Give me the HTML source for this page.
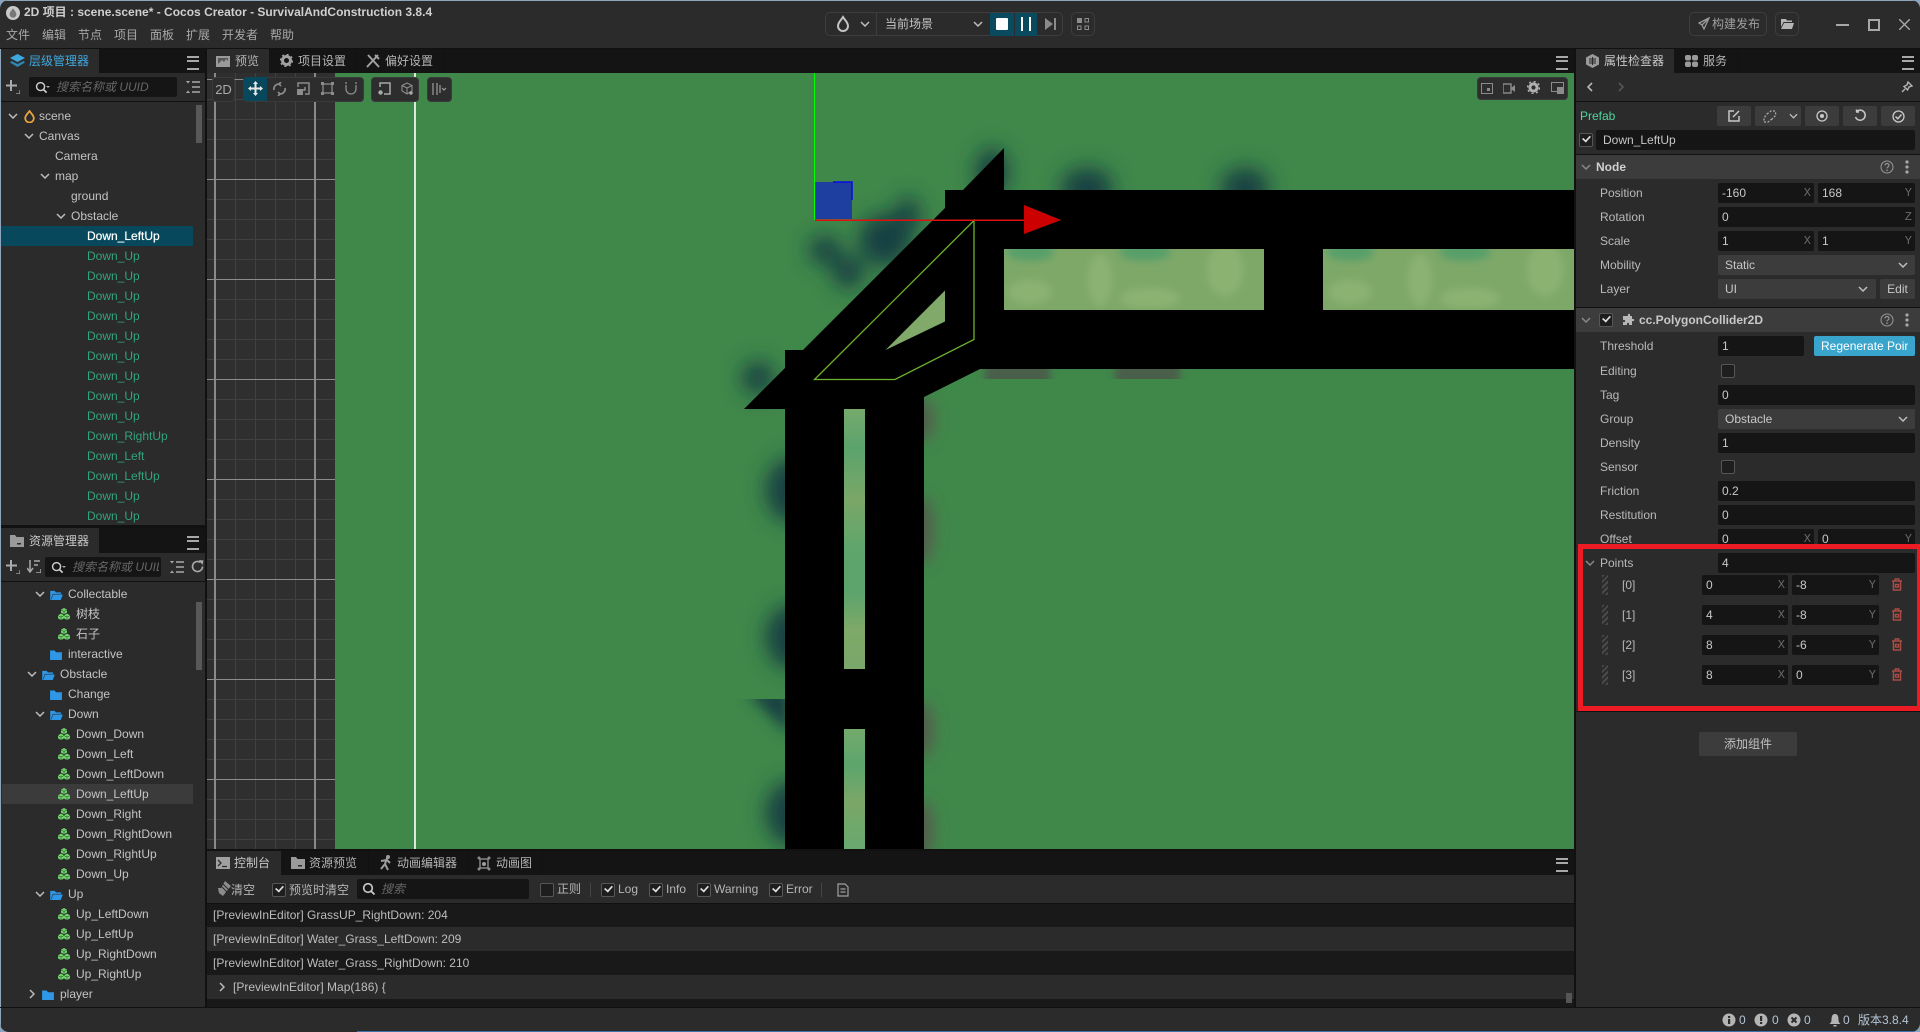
<!DOCTYPE html>
<html lang="zh"><head><meta charset="utf-8"><title>Cocos Creator</title>
<style>
html,body{margin:0;padding:0;width:1920px;height:1032px;overflow:hidden;background:#8aa4bd}
#app{position:absolute;left:0;top:0;width:1920px;height:1032px;background:#2b2b2b;border-radius:9px;overflow:hidden;font:12px/20px "Liberation Sans","Noto Sans CJK SC",sans-serif;color:#c4c4c4}
#app div,#app span,#app svg{position:absolute}
.k{background:#111}
.s{background:#141414}
.t{white-space:nowrap;height:20px;line-height:20px}
.g{color:#32a37c}
.lb{color:#b9b9b9;left:1600px}
.in{background:#151515;height:20px;border-radius:2px;line-height:20px;text-indent:4px;color:#c8c8c8;white-space:nowrap}
.sel{background:#3c3c3c;height:20px;border-radius:2px;line-height:20px;text-indent:7px;color:#c8c8c8}
.ax{right:3px;top:0;font:12px/20px "Liberation Mono",monospace;color:#6a6a6a;text-indent:0}
.cb{width:12px;height:12px;background:#1e1e1e;border:1px solid #565656;border-radius:2px}
.cb.on::after{content:"";position:absolute;left:2px;top:1px;width:7px;height:4px;border-left:2px solid #ddd;border-bottom:2px solid #ddd;transform:rotate(-48deg) scale(.85)}
.h{background:#3c3c3c;height:24px;left:1576px;width:344px}
.bt{background:#3c3c3c;height:20px;top:106px;border-radius:2px}
.hb{width:12px;height:10px;border-top:2px solid #a8a8a8;border-bottom:2px solid #a8a8a8}
.hb::after{content:"";position:absolute;left:0;right:0;top:2px;height:2px;background:#a8a8a8}
.hd{width:6px;height:20px;left:1602px;background:repeating-linear-gradient(135deg,#4a4a4a 0 2px,#2b2b2b 2px 4px)}
.tab{color:#b5b5b5}
</style></head><body>
<div id="app">
<svg width="0" height="0" style="left:0;top:0"><defs>
<symbol id="pf" viewBox="0 0 12 12"><g fill="#6ed66b"><path d="M6 0 9 1.600V4.600L6 6.200 3 4.600V1.600Z"/><path d="M3 5.600 6 7.200V10.400L3 12 0 10.400V7.200Z"/><path d="M9 5.600 12 7.200V10.400L9 12 6 10.400V7.200Z"/></g><g fill="none" stroke="#2b2b2b" stroke-width=".5"><path d="M3 1.900 6 3.400 9 1.900M6 3.400V6M0 7.600 3 9 6 7.600M3 9V12M6 7.600 9 9 12 7.600M9 9V12"/></g></symbol>
<symbol id="fc" viewBox="0 0 13 11"><path fill="#2f97e8" d="M0 .5H5L6.500 2.500H13V11H0Z"/></symbol>
<symbol id="fo" viewBox="0 0 14 11"><path fill="#2f97e8" d="M0 1H5L6.500 2.600H12V4.200H3L1 9.400V11H0ZM3.400 5H14L11.600 11H1Z"/></symbol>
<symbol id="dn" viewBox="0 0 10 6"><path fill="none" stroke="#bdbdbd" stroke-width="1.500" d="M1 1 5 5 9 1"/></symbol>
<symbol id="rt" viewBox="0 0 6 10"><path fill="none" stroke="#bdbdbd" stroke-width="1.500" d="M1 1 5 5 1 9"/></symbol>
<symbol id="tr" viewBox="0 0 12 13"><path fill="none" stroke="#a84c45" stroke-width="1.400" d="M1 3H11M4.200 3V1H7.800V3M2.400 3V12H9.600V3M4.400 6.500H7.600V9H4.400Z"/></symbol>
<symbol id="hp" viewBox="0 0 14 14"><circle cx="7" cy="7" r="6" fill="none" stroke="#999" stroke-width="1"/><path fill="none" stroke="#999" stroke-width="1.100" d="M5 5.400C5 3 9 3 9 5.400 9 7 7 6.800 7 8.400"/><circle cx="7" cy="10.200" r=".8" fill="#999"/></symbol>
<symbol id="dt" viewBox="0 0 4 14"><g fill="#a8a8a8"><circle cx="2" cy="2" r="1.600"/><circle cx="2" cy="7" r="1.600"/><circle cx="2" cy="12" r="1.600"/></g></symbol>
<symbol id="ms" viewBox="0 0 14 14"><circle cx="6" cy="6" r="4.300" fill="none" stroke="#ccc" stroke-width="1.600"/><path stroke="#ccc" stroke-width="1.800" d="M9 9 12.500 12.500"/></symbol>
<symbol id="pl" viewBox="0 0 14 14"><path stroke="#aaa" stroke-width="2" d="M5 0V11M0 5.500H11"/><path stroke="#aaa" stroke-width="1.200" fill="none" d="M10 14H14V10"/></symbol>
<symbol id="ex" viewBox="0 0 14 12"><path stroke="#aaa" stroke-width="1.600" d="M6 1H14M6 6H14M6 11H14"/><path fill="#aaa" d="M0 0H4L2 2.500ZM0 12H4L2 9.500Z"/></symbol>
</defs></svg>

<!-- chrome -->
<div style="left:0;top:0;width:1920px;height:1px;background:#8ea5ba"></div>
<div style="left:0;top:0;width:1px;height:1032px;background:#8ea5ba"></div>
<div style="left:357px;top:1031px;width:1563px;height:1px;background:#3d6fa8"></div>
<div style="left:0;top:1px;width:1920px;height:47px;background:#2b2b2b"></div>
<div class="k" style="left:0;top:48px;width:1920px;height:1px"></div>

<!-- title -->
<svg style="left:6px;top:6px" width="14" height="14" viewBox="0 0 14 14"><circle cx="7" cy="7" r="7" fill="#c9c9c9"/><path fill="#777" d="M7 2.200C9 5 10.400 6.400 10.400 8.400A3.400 3.400 0 0 1 3.600 8.400C3.600 6.400 5 5 7 2.200Z"/></svg>
<div class="t" style="left:24px;top:2px;color:#cfcfcf;font-weight:bold;">2D 项目 : scene.scene* - Cocos Creator - SurvivalAndConstruction 3.8.4</div>
<div class="t" style="left:6px;top:25px;color:#a8a8a8">文件</div>
<div class="t" style="left:42px;top:25px;color:#a8a8a8">编辑</div>
<div class="t" style="left:78px;top:25px;color:#a8a8a8">节点</div>
<div class="t" style="left:114px;top:25px;color:#a8a8a8">项目</div>
<div class="t" style="left:150px;top:25px;color:#a8a8a8">面板</div>
<div class="t" style="left:186px;top:25px;color:#a8a8a8">扩展</div>
<div class="t" style="left:222px;top:25px;color:#a8a8a8">开发者</div>
<div class="t" style="left:270px;top:25px;color:#a8a8a8">帮助</div>

<!-- play controls -->
<div style="left:825px;top:12px;width:236px;height:22px;border:1px solid #3d3d3d;border-radius:5px"></div>
<div style="left:876px;top:13px;width:1px;height:22px;background:#3d3d3d"></div>
<svg style="left:836px;top:15px" width="14" height="17" viewBox="0 0 14 17"><path fill="none" stroke="#c4c4c4" stroke-width="2" d="M7 2C9.500 6 12 7.500 12 11A5 5 0 0 1 2 11C2 7.500 4.500 6 7 2Z"/></svg>
<svg style="left:860px;top:21px" width="10" height="6"><use href="#dn"/></svg>
<div class="t" style="left:885px;top:14px;color:#c4c4c4">当前场景</div>
<svg style="left:973px;top:21px" width="10" height="6"><use href="#dn"/></svg>
<div style="left:990px;top:13px;width:47px;height:23px;background:#0a4a5e"></div>
<div style="left:1014px;top:13px;width:1px;height:23px;background:#2b2b2b"></div>
<div style="left:996px;top:18px;width:12px;height:12px;background:#fff;border-radius:1px"></div>
<div style="left:1021px;top:17px;width:2px;height:14px;background:#fff"></div>
<div style="left:1029px;top:17px;width:2px;height:14px;background:#fff"></div>
<svg style="left:1045px;top:17px" width="11" height="14"><path fill="#8a8a8a" d="M0 1 8 7 0 13Z"/><rect x="9" y="1" width="2" height="12" fill="#8a8a8a"/></svg>
<div style="left:1071px;top:12px;width:22px;height:22px;border:1px solid #3d3d3d;border-radius:5px"></div>
<svg style="left:1077px;top:18px" width="12" height="12"><rect x="0" y="0" width="5" height="5" fill="#8c8c8c"/><rect x="8" y="0.500" width="3.500" height="3.500" fill="none" stroke="#8c8c8c"/><rect x=".5" y="8" width="3.500" height="3.500" fill="none" stroke="#8c8c8c"/><rect x="8" y="8" width="3.500" height="3.500" fill="none" stroke="#8c8c8c"/></svg>

<div style="left:1689px;top:12px;width:76px;height:22px;border:1px solid #3d3d3d;border-radius:5px"></div>
<svg style="left:1698px;top:17px" width="12" height="13"><path fill="none" stroke="#9a9a9a" stroke-width="1.300" d="M11 1 1 6 4 8 6 12Z M11 1 4 8"/></svg>
<div class="t" style="left:1712px;top:14px;color:#a0a0a0">构建发布</div>
<div style="left:1775px;top:12px;width:22px;height:22px;border:1px solid #3d3d3d;border-radius:5px"></div>
<svg style="left:1781px;top:19px" width="13" height="10"><path fill="#b5b5b5" d="M0 0H5L6 1.500H11V3H2.600L0 8ZM3 4H13L11 10H0Z"/></svg>
<div style="left:1836px;top:24px;width:13px;height:2px;background:#a8a8a8"></div>
<div style="left:1868px;top:19px;width:8px;height:8px;border:2px solid #a8a8a8"></div>
<svg style="left:1899px;top:19px" width="11" height="11"><path stroke="#a8a8a8" stroke-width="1.400" d="M0 0 11 11M11 0 0 11"/></svg>

<!-- hierarchy panel -->
<div class="s" style="left:1px;top:49px;width:204px;height:24px"></div>
<div style="left:1px;top:49px;width:98px;height:24px;background:#2b2b2b"></div>
<svg style="left:10px;top:54px" width="15" height="14"><g fill="#3fa8de"><path d="M7.500 0 15 4 7.500 8 0 4Z"/><path d="M1.500 7 7.500 10 13.500 7 15 8.500 7.500 13 0 8.500Z" fill="#2f86b4"/></g></svg>
<div class="t" style="left:29px;top:51px;color:#3fa8de;font-size:12px">层级管理器</div>
<div class="hb" style="left:187px;top:56px"></div>
<div class="k" style="left:205px;top:49px;width:2px;height:958px"></div>
<svg style="left:6px;top:80px" width="14" height="14"><use href="#pl"/></svg>
<div class="in" style="left:29px;top:77px;width:148px;background:#151515"></div>
<svg style="left:35px;top:81px" width="13" height="13"><use href="#ms"/></svg>
<div style="left:46px;top:86px;border-left:2px solid transparent;border-right:2px solid transparent;border-top:2px solid #aaa;width:0;height:0"></div>
<div class="t" style="left:56px;top:77px;color:#666;font-style:italic;">搜索名称或 UUID</div>
<svg style="left:186px;top:81px" width="14" height="12"><use href="#ex"/></svg>
<div class="k" style="left:1px;top:101px;width:204px;height:1px"></div>
<div style="left:196px;top:105px;width:6px;height:38px;background:#585858"></div>

<svg style="left:8px;top:113px" width="10" height="6"><use href="#dn"/></svg>
<svg style="left:24px;top:110px" width="11" height="13" viewBox="0 0 11 13"><path fill="none" stroke="#e8a33c" stroke-width="1.800" d="M5.500 1C7.500 4 9.800 5.500 9.800 8.200A4.300 4.300 0 0 1 1.200 8.200C1.200 5.500 3.500 4 5.500 1Z"/></svg>
<div class="t" style="left:39px;top:106px">scene</div>
<svg style="left:24px;top:133px" width="10" height="6"><use href="#dn"/></svg>
<div class="t" style="left:39px;top:126px">Canvas</div>
<div class="t" style="left:55px;top:146px">Camera</div>
<svg style="left:40px;top:173px" width="10" height="6"><use href="#dn"/></svg>
<div class="t" style="left:55px;top:166px">map</div>
<div class="t" style="left:71px;top:186px">ground</div>
<svg style="left:56px;top:213px" width="10" height="6"><use href="#dn"/></svg>
<div class="t" style="left:71px;top:206px">Obstacle</div>
<div style="left:1px;top:226px;width:192px;height:20px;background:#07485c"></div>
<div class="t" style="left:87px;top:226px;color:#fff;text-shadow:0 0 .6px #fff">Down_LeftUp</div>
<div class="t g" style="left:87px;top:246px">Down_Up</div>
<div class="t g" style="left:87px;top:266px">Down_Up</div>
<div class="t g" style="left:87px;top:286px">Down_Up</div>
<div class="t g" style="left:87px;top:306px">Down_Up</div>
<div class="t g" style="left:87px;top:326px">Down_Up</div>
<div class="t g" style="left:87px;top:346px">Down_Up</div>
<div class="t g" style="left:87px;top:366px">Down_Up</div>
<div class="t g" style="left:87px;top:386px">Down_Up</div>
<div class="t g" style="left:87px;top:406px">Down_Up</div>
<div class="t g" style="left:87px;top:426px">Down_RightUp</div>
<div class="t g" style="left:87px;top:446px">Down_Left</div>
<div class="t g" style="left:87px;top:466px">Down_LeftUp</div>
<div class="t g" style="left:87px;top:486px">Down_Up</div>
<div class="t g" style="left:87px;top:506px">Down_Up</div>
<div class="k" style="left:1px;top:525px;width:204px;height:3px"></div>

<!-- assets panel -->
<div class="s" style="left:1px;top:528px;width:204px;height:25px"></div>
<div style="left:1px;top:528px;width:98px;height:25px;background:#2b2b2b"></div>
<svg style="left:10px;top:535px" width="14" height="12"><path fill="#9a9a9a" d="M0 0H5L6.500 2H14V12H0Z"/><rect x="7" y="8" width="4" height="1.500" fill="#2b2b2b"/></svg>
<div class="t" style="left:29px;top:531px;color:#c8c8c8">资源管理器</div>
<div class="hb" style="left:187px;top:536px"></div>
<svg style="left:6px;top:560px" width="14" height="14"><use href="#pl"/></svg>
<svg style="left:27px;top:560px" width="14" height="13"><path stroke="#aaa" stroke-width="1.500" fill="none" d="M3 0V11M0 8 3 12 6 8M7 1H13M7 5H11M9 13H14V9"/></svg>
<div class="in" style="left:45px;top:557px;width:116px"></div>
<svg style="left:51px;top:561px" width="13" height="13"><use href="#ms"/></svg>
<div style="left:62px;top:566px;border-left:2px solid transparent;border-right:2px solid transparent;border-top:2px solid #aaa;width:0;height:0"></div>
<div style="left:72px;top:557px;width:87px;height:20px;overflow:hidden"><div class="t" style="left:0;top:0;color:#666;font-style:italic">搜索名称或 UUID</div></div>
<svg style="left:170px;top:561px" width="14" height="12"><use href="#ex"/></svg>
<svg style="left:191px;top:560px" width="13" height="13" viewBox="0 0 13 13"><path fill="none" stroke="#aaa" stroke-width="1.600" d="M11.500 6.500A5 5 0 1 1 9.500 2.500"/><path fill="#aaa" d="M8 0 12.500 0.500 11.500 5Z"/></svg>
<div class="k" style="left:1px;top:581px;width:204px;height:1px"></div>
<div style="left:196px;top:602px;width:6px;height:68px;background:#585858"></div>

<svg style="left:35px;top:591px" width="10" height="6"><use href="#dn"/></svg>
<svg style="left:50px;top:590px" width="13" height="10" viewBox="0 0 14 11"><use href="#fo"/></svg>
<div class="t" style="left:68px;top:584px">Collectable</div>
<svg style="left:58px;top:608px" width="12" height="12"><use href="#pf"/></svg><div class="t" style="left:76px;top:604px">树枝</div>
<svg style="left:58px;top:628px" width="12" height="12"><use href="#pf"/></svg><div class="t" style="left:76px;top:624px">石子</div>
<svg style="left:50px;top:650px" width="12" height="10"><use href="#fc"/></svg><div class="t" style="left:68px;top:644px">interactive</div>
<svg style="left:27px;top:671px" width="10" height="6"><use href="#dn"/></svg>
<svg style="left:42px;top:670px" width="13" height="10" viewBox="0 0 14 11"><use href="#fo"/></svg>
<div class="t" style="left:60px;top:664px">Obstacle</div>
<svg style="left:50px;top:690px" width="12" height="10"><use href="#fc"/></svg><div class="t" style="left:68px;top:684px">Change</div>
<svg style="left:35px;top:711px" width="10" height="6"><use href="#dn"/></svg>
<svg style="left:50px;top:710px" width="13" height="10" viewBox="0 0 14 11"><use href="#fo"/></svg>
<div class="t" style="left:68px;top:704px">Down</div>
<svg style="left:58px;top:728px" width="12" height="12"><use href="#pf"/></svg><div class="t" style="left:76px;top:724px">Down_Down</div>
<svg style="left:58px;top:748px" width="12" height="12"><use href="#pf"/></svg><div class="t" style="left:76px;top:744px">Down_Left</div>
<svg style="left:58px;top:768px" width="12" height="12"><use href="#pf"/></svg><div class="t" style="left:76px;top:764px">Down_LeftDown</div>
<div style="left:2px;top:784px;width:191px;height:20px;background:#3b3b3b"></div>
<svg style="left:58px;top:788px" width="12" height="12"><use href="#pf"/></svg><div class="t" style="left:76px;top:784px">Down_LeftUp</div>
<svg style="left:58px;top:808px" width="12" height="12"><use href="#pf"/></svg><div class="t" style="left:76px;top:804px">Down_Right</div>
<svg style="left:58px;top:828px" width="12" height="12"><use href="#pf"/></svg><div class="t" style="left:76px;top:824px">Down_RightDown</div>
<svg style="left:58px;top:848px" width="12" height="12"><use href="#pf"/></svg><div class="t" style="left:76px;top:844px">Down_RightUp</div>
<svg style="left:58px;top:868px" width="12" height="12"><use href="#pf"/></svg><div class="t" style="left:76px;top:864px">Down_Up</div>
<svg style="left:35px;top:891px" width="10" height="6"><use href="#dn"/></svg>
<svg style="left:50px;top:890px" width="13" height="10" viewBox="0 0 14 11"><use href="#fo"/></svg>
<div class="t" style="left:68px;top:884px">Up</div>
<svg style="left:58px;top:908px" width="12" height="12"><use href="#pf"/></svg><div class="t" style="left:76px;top:904px">Up_LeftDown</div>
<svg style="left:58px;top:928px" width="12" height="12"><use href="#pf"/></svg><div class="t" style="left:76px;top:924px">Up_LeftUp</div>
<svg style="left:58px;top:948px" width="12" height="12"><use href="#pf"/></svg><div class="t" style="left:76px;top:944px">Up_RightDown</div>
<svg style="left:58px;top:968px" width="12" height="12"><use href="#pf"/></svg><div class="t" style="left:76px;top:964px">Up_RightUp</div>
<svg style="left:29px;top:989px" width="6" height="10"><use href="#rt"/></svg>
<svg style="left:42px;top:990px" width="12" height="10"><use href="#fc"/></svg><div class="t" style="left:60px;top:984px">player</div>

<!-- center tabs -->
<div class="s" style="left:207px;top:49px;width:1367px;height:24px"></div>
<div style="left:207px;top:49px;width:62px;height:24px;background:#2b2b2b"></div>
<div class="k" style="left:356px;top:49px;width:1px;height:24px"></div>
<div class="k" style="left:443px;top:49px;width:1px;height:24px"></div>
<svg style="left:216px;top:56px" width="14" height="11"><rect width="14" height="11" fill="#9a9a9a"/><path fill="#2b2b2b" d="M3 7 6 4 8 6 10 3 12 5V2H2V8Z" opacity=".6"/></svg>
<div class="t tab" style="left:235px;top:51px">预览</div>
<svg style="left:280px;top:54px" width="13" height="13" viewBox="0 0 13 13"><circle cx="6.500" cy="6.500" r="4" fill="none" stroke="#a0a0a0" stroke-width="3"/><circle cx="6.500" cy="6.500" r="6" fill="none" stroke="#a0a0a0" stroke-width="1.500" stroke-dasharray="2 2.700"/></svg>
<div class="t tab" style="left:298px;top:51px">项目设置</div>
<svg style="left:366px;top:54px" width="14" height="14"><path stroke="#a0a0a0" stroke-width="2" fill="none" d="M2 1 13 13M12 1 1 13M9 1 13 5"/></svg>
<div class="t tab" style="left:385px;top:51px">偏好设置</div>
<div class="hb" style="left:1556px;top:56px"></div>

<!-- scene -->
<div style="left:207px;top:73px;width:128px;height:776px;background-color:#2f2f2f;background-image:linear-gradient(#8c8c8c 1px,transparent 1px),linear-gradient(#414141 1px,transparent 1px),linear-gradient(90deg,#414141 1px,transparent 1px);background-size:100% 100px,100% 20px,20px 100%;background-position:0 6px,0 6px,8px 0"></div>
<div style="left:214px;top:73px;width:2px;height:776px;background:#8a8a8a"></div>
<div style="left:314px;top:73px;width:2px;height:776px;background:#8a8a8a"></div>
<div style="left:335px;top:73px;width:1239px;height:776px;background:#40874a"></div>
<div style="left:414px;top:73px;width:2px;height:776px;background:#dce8dc"></div>

<svg style="left:207px;top:73px" width="1367" height="776" viewBox="207 73 1367 776">
<defs>
<filter id="b1" filterUnits="userSpaceOnUse" x="207" y="73" width="1367" height="776"><feGaussianBlur stdDeviation="10"/></filter>
<filter id="b2" filterUnits="userSpaceOnUse" x="207" y="73" width="1367" height="776"><feGaussianBlur stdDeviation="4"/></filter>
<filter id="b3" filterUnits="userSpaceOnUse" x="207" y="73" width="1367" height="776"><feGaussianBlur stdDeviation="7"/></filter>
<clipPath id="c1"><rect x="700" y="699" width="300" height="150"/></clipPath>
<clipPath id="c2"><rect x="900" y="369" width="400" height="10"/></clipPath>
<clipPath id="cw"><rect x="1004" y="249" width="260" height="61"/><rect x="1323" y="249" width="251" height="61"/></clipPath>
<linearGradient id="gs" x1="0" y1="0" x2="0" y2="1"><stop offset="0" stop-color="#76aa6c"/><stop offset=".15" stop-color="#5ba36c"/><stop offset=".35" stop-color="#7aa768"/><stop offset=".55" stop-color="#5ea56c"/><stop offset=".7" stop-color="#5ba36c"/><stop offset=".85" stop-color="#7ea968"/><stop offset="1" stop-color="#7aa86a"/></linearGradient>
<linearGradient id="gs2" x1="0" y1="0" x2="0" y2="1"><stop offset="0" stop-color="#74aa6c"/><stop offset=".3" stop-color="#5ca56c"/><stop offset=".6" stop-color="#7aa768"/><stop offset="1" stop-color="#68a86e"/></linearGradient>
</defs>
<g fill="#163f42" filter="url(#b1)">
<ellipse cx="1087" cy="188" rx="26" ry="20"/>
<ellipse cx="1245" cy="188" rx="24" ry="20"/>
<ellipse cx="992" cy="172" rx="16" ry="24"/>
<ellipse cx="908" cy="215" rx="12" ry="18"/>
<ellipse cx="825" cy="250" rx="16" ry="14"/>
<ellipse cx="848" cy="272" rx="16" ry="16"/>
<ellipse cx="885" cy="240" rx="26" ry="26"/>
<ellipse cx="758" cy="378" rx="16" ry="16"/>
<ellipse cx="792" cy="490" rx="26" ry="32"/>
<ellipse cx="792" cy="637" rx="26" ry="32"/>
<ellipse cx="792" cy="813" rx="26" ry="32"/>
</g>
<g clip-path="url(#c1)"><path fill="#163f42" filter="url(#b3)" d="M745 690H790V735Z"/></g>
<g fill="#525f4d" filter="url(#b3)">
<ellipse cx="922" cy="420" rx="12" ry="22"/><ellipse cx="922" cy="530" rx="12" ry="34"/><ellipse cx="922" cy="730" rx="12" ry="28"/><ellipse cx="922" cy="830" rx="12" ry="30"/>
</g>
<g clip-path="url(#c2)"><g fill="#4a5f48" filter="url(#b2)"><rect x="985" y="360" width="65" height="30"/><rect x="1115" y="360" width="65" height="30"/></g></g>
<path fill="#000" d="M1004 148V190H1574V369H980L924 397V849H785V409H744L785 368V350H803L945 208V190H963Z"/>
<rect x="1004" y="249" width="260" height="61" fill="#7ea868"/>
<rect x="1323" y="249" width="251" height="61" fill="#7ea868"/>
<g clip-path="url(#cw)">
<g filter="url(#b2)">
<ellipse cx="1030" cy="252" rx="24" ry="9" fill="#579f6b"/>
<ellipse cx="1145" cy="252" rx="26" ry="9" fill="#579f6b"/>
<ellipse cx="1100" cy="280" rx="12" ry="26" fill="#8cb272"/>
<ellipse cx="1030" cy="292" rx="22" ry="12" fill="#8cb272"/>
<ellipse cx="1150" cy="298" rx="30" ry="10" fill="#8cb272"/>
<ellipse cx="1225" cy="270" rx="18" ry="26" fill="#8cb272"/>
<ellipse cx="1350" cy="252" rx="24" ry="9" fill="#579f6b"/>
<ellipse cx="1465" cy="252" rx="26" ry="9" fill="#579f6b"/>
<ellipse cx="1420" cy="280" rx="12" ry="26" fill="#8cb272"/>
<ellipse cx="1350" cy="292" rx="22" ry="12" fill="#8cb272"/>
<ellipse cx="1470" cy="298" rx="30" ry="10" fill="#8cb272"/>
<ellipse cx="1545" cy="270" rx="18" ry="26" fill="#8cb272"/>
</g></g>
<path fill="#80a96a" d="M885.500 350 945 290.500V321.500Z"/>
<rect x="844" y="409" width="21" height="260" fill="url(#gs)"/>
<rect x="844" y="729" width="21" height="120" fill="url(#gs2)"/>
<path fill="none" stroke="#6db32c" stroke-width="1.300" d="M974 220.500 814.500 379.500H895L974 339.500Z"/>
<rect x="815" y="182" width="37" height="37" fill="#1e3fa0"/>
<path fill="none" stroke="#0a0ae6" stroke-width="1.500" d="M833 182H852V200"/>
<rect x="814" y="73" width="1" height="147" fill="#00ff00"/>
<rect x="815" y="219.500" width="210" height="1.500" fill="#e01010"/>
<path fill="#cc0000" d="M1024 205 1061 220 1024 234Z"/>
</svg>

<!-- scene toolbar -->
<div style="left:212px;top:77px;width:21px;height:23px;background:#2d2d2d;border:1px solid #3a3a3a;border-radius:4px;color:#aaa;text-align:center;line-height:23px;font-size:13px">2D</div>
<div style="left:243px;top:77px;width:119px;height:23px;background:#2d2d2d;border:1px solid #3a3a3a;border-radius:4px"></div>
<div style="left:243px;top:77px;width:24px;height:24px;background:#07485c;border-radius:4px 0 0 4px"></div>
<svg style="left:248px;top:81px" width="15" height="15" viewBox="0 0 15 15"><path fill="#e8e8e8" d="M7.500 0 10 3H8.500V6.500H12V5L15 7.500 12 10V8.500H8.500V12H10L7.500 15 5 12H6.500V8.500H3V10L0 7.500 3 5V6.500H6.500V3H5Z"/></svg>
<svg style="left:273px;top:82px" width="13" height="14" viewBox="0 0 13 14"><path fill="none" stroke="#8c8c8c" stroke-width="1.700" d="M1 8C0 4 4 1.500 7 2M12 6C13 10 9 12.500 6 12M8 0 6 2 8 4M5 10 7 12 5 14"/></svg>
<svg style="left:297px;top:82px" width="13" height="13"><path fill="none" stroke="#8c8c8c" stroke-width="1.500" d="M1 5V1H12V12H8M5 8H8V5"/><rect x="0" y="7" width="6" height="6" fill="#8c8c8c"/></svg>
<svg style="left:321px;top:82px" width="13" height="13"><rect x="2" y="2" width="9" height="9" fill="none" stroke="#8c8c8c" stroke-width="1.300"/><g fill="#8c8c8c"><rect width="3" height="3"/><rect x="10" width="3" height="3"/><rect y="10" width="3" height="3"/><rect x="10" y="10" width="3" height="3"/></g></svg>
<svg style="left:345px;top:82px" width="12" height="13"><path fill="none" stroke="#8c8c8c" stroke-width="1.300" d="M1 3V7A5 5 0 0 0 11 7V3"/><path stroke="#8c8c8c" stroke-width="1.300" d="M1 0V2M11 0V2"/></svg>
<div style="left:371px;top:77px;width:46px;height:23px;background:#2d2d2d;border:1px solid #3a3a3a;border-radius:4px"></div>
<svg style="left:378px;top:82px" width="13" height="13"><path fill="none" stroke="#aaa" stroke-width="1.500" d="M2 5V1H12V12H6"/><circle cx="2.500" cy="10.500" r="2.200" fill="#aaa"/></svg>
<svg style="left:401px;top:82px" width="13" height="14"><path fill="none" stroke="#8c8c8c" stroke-width="1.100" d="M6 1 11 3.500V9L6 12 1 9V3.500ZM1 3.500 6 6 11 3.500M6 6V12"/><circle cx="10" cy="11" r="1.700" fill="#aaa"/></svg>
<div style="left:427px;top:77px;width:23px;height:23px;background:#2d2d2d;border:1px solid #3a3a3a;border-radius:4px"></div>
<svg style="left:432px;top:82px" width="15" height="14"><path stroke="#9c9c9c" stroke-width="1.200" fill="none" d="M1 1V13M5 1V13M8 3V11M10 6 12 8 14 6"/></svg>

<!-- scene right tools -->
<div style="left:1477px;top:77px;width:89px;height:21px;background:#2d2d2d;border:1px solid #3a3a3a;border-radius:4px"></div>
<svg style="left:1481px;top:83px" width="12" height="11"><rect x=".5" y=".5" width="11" height="10" fill="none" stroke="#8c8c8c"/><rect x="6" y="5" width="3" height="3" fill="#8c8c8c"/></svg>
<svg style="left:1503px;top:83px" width="12" height="11"><rect y="1" width="8" height="9" fill="none" stroke="#8c8c8c" stroke-width="1.400"/><path fill="#8c8c8c" d="M8 5 12 2V9L8 6Z"/></svg>
<svg style="left:1527px;top:81px" width="13" height="13" viewBox="0 0 13 13"><circle cx="6.500" cy="6.500" r="3.600" fill="none" stroke="#b0b0b0" stroke-width="3"/><circle cx="6.500" cy="6.500" r="6" fill="none" stroke="#b0b0b0" stroke-width="1.500" stroke-dasharray="2 2.700"/></svg>
<svg style="left:1551px;top:82px" width="13" height="12"><rect x=".5" y=".5" width="12" height="9" fill="none" stroke="#8c8c8c"/><rect x="6" y="5" width="7" height="7" fill="#8c8c8c"/></svg>

<!-- console -->
<div class="k" style="left:207px;top:849px;width:1367px;height:2px"></div>
<div class="s" style="left:207px;top:851px;width:1367px;height:24px"></div>
<div style="left:207px;top:851px;width:74px;height:24px;background:#2b2b2b"></div>
<div class="k" style="left:368px;top:851px;width:1px;height:24px"></div>
<div class="k" style="left:467px;top:851px;width:1px;height:24px"></div>
<div class="k" style="left:542px;top:851px;width:1px;height:24px"></div>
<svg style="left:216px;top:857px" width="14" height="12"><rect width="14" height="12" fill="#a0a0a0"/><path stroke="#2b2b2b" stroke-width="1.300" fill="none" d="M2 3 5 6 2 9M6 9.500H11"/></svg>
<div class="t" style="left:234px;top:853px;color:#c8c8c8">控制台</div>
<svg style="left:291px;top:857px" width="14" height="12"><path fill="#9a9a9a" d="M0 0H5L6.500 2H14V12H0Z"/><rect x="7" y="8" width="4" height="1.500" fill="#2b2b2b"/></svg>
<div class="t tab" style="left:309px;top:853px">资源预览</div>
<svg style="left:379px;top:855px" width="13" height="16"><path fill="none" stroke="#9c9c9c" stroke-width="2" d="M8 3 6 9 9 15M6 9 2 14M2 6 8 5 11 8"/><circle cx="9" cy="2" r="2" fill="#9c9c9c"/></svg>
<div class="t tab" style="left:397px;top:853px">动画编辑器</div>
<svg style="left:477px;top:856px" width="14" height="15"><rect x="3" y="3" width="8" height="9" fill="none" stroke="#8c8c8c" stroke-width="1.400"/><circle cx="7" cy="8" r="2" fill="#9c9c9c"/><g fill="#8c8c8c"><circle cx="2" cy="2" r="1.500"/><circle cx="12" cy="2" r="1.500"/><circle cx="2" cy="13" r="1.500"/><circle cx="12" cy="13" r="1.500"/></g></svg>
<div class="t tab" style="left:496px;top:853px">动画图</div>
<div class="hb" style="left:1556px;top:858px"></div>
<svg style="left:218px;top:881px" width="13" height="15"><path fill="#8c8c8c" d="M7 0 13 5 8 11 5 15 1 12 0 7 3 7Z"/><path stroke="#2b2b2b" d="M3 5 9 11M5 3 11 9"/></svg>
<div class="t" style="left:231px;top:880px;color:#b5b5b5">清空</div>
<div class="cb on" style="left:272px;top:883px"></div>
<div class="t" style="left:289px;top:880px;color:#b5b5b5">预览时清空</div>
<div class="in" style="left:357px;top:879px;width:172px"></div>
<svg style="left:362px;top:882px" width="14" height="14"><use href="#ms"/></svg>
<div class="t" style="left:381px;top:879px;color:#666;font-style:italic">搜索</div>
<div class="cb" style="left:540px;top:883px"></div>
<div class="t" style="left:557px;top:879px;color:#b5b5b5">正则</div>
<div style="left:590px;top:883px;width:1px;height:14px;background:#444"></div>
<div class="cb on" style="left:601px;top:883px"></div><div class="t" style="left:618px;top:879px;color:#b5b5b5">Log</div>
<div class="cb on" style="left:649px;top:883px"></div><div class="t" style="left:666px;top:879px;color:#b5b5b5">Info</div>
<div class="cb on" style="left:697px;top:883px"></div><div class="t" style="left:714px;top:879px;color:#b5b5b5">Warning</div>
<div class="cb on" style="left:769px;top:883px"></div><div class="t" style="left:786px;top:879px;color:#b5b5b5">Error</div>
<div style="left:821px;top:883px;width:1px;height:14px;background:#444"></div>
<svg style="left:837px;top:883px" width="12" height="14"><path fill="none" stroke="#a0a0a0" stroke-width="1.200" d="M1 1H8L11 4V13H1ZM3.500 6H8.500M3.500 9H8.500"/></svg>
<div class="k" style="left:207px;top:903px;width:1367px;height:1px"></div>
<div style="left:207px;top:904px;width:1367px;height:23px;background:#191919"></div>
<div style="left:207px;top:951px;width:1367px;height:24px;background:#191919"></div>
<div style="left:207px;top:999px;width:1367px;height:8px;background:#191919"></div>
<div class="t" style="left:213px;top:905px;color:#bdbdbd">[PreviewInEditor] GrassUP_RightDown: 204</div>
<div class="t" style="left:213px;top:929px;color:#bdbdbd">[PreviewInEditor] Water_Grass_LeftDown: 209</div>
<div class="t" style="left:213px;top:953px;color:#bdbdbd">[PreviewInEditor] Water_Grass_RightDown: 210</div>
<svg style="left:219px;top:982px" width="6" height="10"><use href="#rt"/></svg>
<div class="t" style="left:233px;top:977px;color:#bdbdbd">[PreviewInEditor] Map(186) {</div>
<div style="left:1566px;top:993px;width:6px;height:10px;background:#555"></div>

<!-- right panel -->
<div class="k" style="left:1574px;top:49px;width:2px;height:958px"></div>
<div class="s" style="left:1576px;top:49px;width:344px;height:24px"></div>
<div style="left:1576px;top:49px;width:98px;height:24px;background:#2b2b2b"></div>
<div class="k" style="left:1737px;top:49px;width:1px;height:24px"></div>
<svg style="left:1586px;top:54px" width="13" height="14"><path fill="#9a9a9a" d="M6.500 0 13 3.500V10.500L6.500 14 0 10.500V3.500Z"/><path stroke="#2b2b2b" d="M6.500 3V11M3 7H10M3 5H10M3 9H10"/></svg>
<div class="t" style="left:1604px;top:51px;color:#c8c8c8">属性检查器</div>
<svg style="left:1685px;top:55px" width="13" height="12"><g fill="#9a9a9a"><rect width="6" height="5.500" rx="2"/><rect x="7" width="6" height="5.500" rx="2"/><rect y="6.500" width="6" height="5.500" rx="2"/><rect x="7" y="6.500" width="6" height="5.500" rx="2"/></g></svg>
<div class="t tab" style="left:1703px;top:51px">服务</div>
<div class="hb" style="left:1902px;top:56px"></div>
<svg style="left:1587px;top:82px" width="6" height="10"><path fill="none" stroke="#b5b5b5" stroke-width="1.600" d="M5 1 1 5 5 9"/></svg>
<svg style="left:1618px;top:82px" width="6" height="10"><path fill="none" stroke="#555" stroke-width="1.600" d="M1 1 5 5 1 9"/></svg>
<svg style="left:1901px;top:81px" width="12" height="12"><path fill="none" stroke="#b5b5b5" stroke-width="1.400" d="M7 1 11 5 8 6 6.500 9 3 5.500 6 4ZM4 8 1 11"/></svg>
<div class="k" style="left:1576px;top:101px;width:344px;height:1px"></div>

<div class="t" style="left:1580px;top:106px;color:#4fd6a0">Prefab</div>
<div class="bt" style="left:1717px;width:34px"></div>
<svg style="left:1728px;top:110px" width="12" height="12"><path fill="none" stroke="#c8c8c8" stroke-width="1.500" d="M6 1H1V11H11V6M5 7 11 1"/></svg>
<div class="bt" style="left:1755px;width:46px"></div>
<svg style="left:1763px;top:110px" width="14" height="13"><path fill="none" stroke="#aaa" stroke-width="1.300" stroke-dasharray="2 1.500" d="M4 4 8 1 12 1 13 5 9 9M9 9 5 12 1 12 1 8 4 4"/></svg>
<svg style="left:1789px;top:113px" width="9" height="6"><use href="#dn"/></svg>
<div class="bt" style="left:1805px;width:34px"></div>
<svg style="left:1816px;top:110px" width="12" height="12"><circle cx="6" cy="6" r="5" fill="none" stroke="#c8c8c8" stroke-width="1.300"/><circle cx="6" cy="6" r="2" fill="#c8c8c8"/></svg>
<div class="bt" style="left:1843px;width:34px"></div>
<svg style="left:1854px;top:109px" width="13" height="13"><path fill="none" stroke="#c8c8c8" stroke-width="1.500" d="M2.500 2.500V.5M2 3H5M2.300 3A5 5 0 1 1 1.500 8"/></svg>
<div class="bt" style="left:1881px;width:34px"></div>
<svg style="left:1892px;top:110px" width="13" height="13"><circle cx="6.500" cy="6.500" r="5.500" fill="none" stroke="#c8c8c8" stroke-width="1.300"/><path fill="none" stroke="#c8c8c8" stroke-width="1.500" d="M3.500 6.500 5.800 8.800 9.500 4.500"/></svg>

<div class="cb on" style="left:1579px;top:133px"></div>
<div class="in" style="left:1596px;top:130px;width:319px;text-indent:7px">Down_LeftUp</div>
<div class="k" style="left:1576px;top:154px;width:344px;height:1px"></div>

<div class="h" style="top:155px"></div>
<svg style="left:1581px;top:164px" width="10" height="6"><path fill="none" stroke="#888" stroke-width="1.500" d="M1 1 5 5 9 1"/></svg>
<div class="t" style="left:1596px;top:157px;font-weight:bold;color:#d0d0d0">Node</div>
<svg style="left:1880px;top:160px" width="14" height="14"><use href="#hp"/></svg>
<svg style="left:1905px;top:160px" width="4" height="14"><use href="#dt"/></svg>
<div class="t lb" style="top:183px">Position</div>
<div class="in" style="left:1718px;top:183px;width:96px">-160<span class="ax">X</span></div>
<div class="in" style="left:1818px;top:183px;width:97px">168<span class="ax">Y</span></div>
<div class="t lb" style="top:207px">Rotation</div>
<div class="in" style="left:1718px;top:207px;width:197px">0<span class="ax">Z</span></div>
<div class="t lb" style="top:231px">Scale</div>
<div class="in" style="left:1718px;top:231px;width:96px">1<span class="ax">X</span></div>
<div class="in" style="left:1818px;top:231px;width:97px">1<span class="ax">Y</span></div>
<div class="t lb" style="top:255px">Mobility</div>
<div class="sel" style="left:1718px;top:255px;width:197px">Static</div>
<svg style="left:1898px;top:262px" width="10" height="6"><use href="#dn"/></svg>
<div class="t lb" style="top:279px">Layer</div>
<div class="sel" style="left:1718px;top:279px;width:158px">UI</div>
<svg style="left:1858px;top:286px" width="10" height="6"><use href="#dn"/></svg>
<div class="sel" style="left:1880px;top:279px;width:35px;text-align:center;text-indent:0">Edit</div>
<div class="k" style="left:1576px;top:307px;width:344px;height:1px"></div>

<div class="h" style="top:308px"></div>
<svg style="left:1581px;top:317px" width="10" height="6"><path fill="none" stroke="#888" stroke-width="1.500" d="M1 1 5 5 9 1"/></svg>
<div class="cb on" style="left:1599px;top:313px"></div>
<svg style="left:1622px;top:313px" width="13" height="14"><path fill="#b8b8b8" d="M4 3H6C5 0 9 0 8 3H10V6C13 5 13 9 10 8V12H7C8 9 4 9 5 12H1V9C4 10 4 6 1 7V3Z"/></svg>
<div class="t" style="left:1639px;top:310px;font-weight:bold;color:#c8c8c8">cc.PolygonCollider2D</div>
<svg style="left:1880px;top:313px" width="14" height="14"><use href="#hp"/></svg>
<svg style="left:1905px;top:313px" width="4" height="14"><use href="#dt"/></svg>

<div class="t lb" style="top:336px">Threshold</div>
<div class="in" style="left:1718px;top:336px;width:86px">1</div>
<div style="left:1814px;top:336px;width:101px;height:20px;background:#3aa5cc;border-radius:2px"><div style="left:7px;top:0;width:87px;height:20px;overflow:hidden"><div class="t" style="left:0;top:0;color:#fff">Regenerate Points</div></div></div>
<div class="t lb" style="top:361px">Editing</div>
<div class="cb" style="left:1721px;top:364px"></div>
<div class="t lb" style="top:385px">Tag</div>
<div class="in" style="left:1718px;top:385px;width:197px">0</div>
<div class="t lb" style="top:409px">Group</div>
<div class="sel" style="left:1718px;top:409px;width:197px">Obstacle</div>
<svg style="left:1898px;top:416px" width="10" height="6"><use href="#dn"/></svg>
<div class="t lb" style="top:433px">Density</div>
<div class="in" style="left:1718px;top:433px;width:197px">1</div>
<div class="t lb" style="top:457px">Sensor</div>
<div class="cb" style="left:1721px;top:460px"></div>
<div class="t lb" style="top:481px">Friction</div>
<div class="in" style="left:1718px;top:481px;width:197px">0.2</div>
<div class="t lb" style="top:505px">Restitution</div>
<div class="in" style="left:1718px;top:505px;width:197px">0</div>
<div class="t lb" style="top:529px">Offset</div>
<div class="in" style="left:1718px;top:529px;width:96px">0<span class="ax">X</span></div>
<div class="in" style="left:1818px;top:529px;width:97px">0<span class="ax">Y</span></div>

<div style="left:1583px;top:549px;width:337px;height:157px;background:#2b2b2b"></div>
<svg style="left:1585px;top:560px" width="10" height="6"><path fill="none" stroke="#888" stroke-width="1.500" d="M1 1 5 5 9 1"/></svg>
<div class="t lb" style="top:553px">Points</div>
<div class="in" style="left:1718px;top:553px;width:197px">4</div>
<div class="hd" style="top:575px"></div>
<div class="t" style="left:1622px;top:575px;color:#b9b9b9">[0]</div>
<div class="in" style="left:1702px;top:575px;width:86px">0<span class="ax">X</span></div>
<div class="in" style="left:1792px;top:575px;width:87px">-8<span class="ax">Y</span></div>
<svg style="left:1891px;top:578px" width="12" height="13"><use href="#tr"/></svg>
<div class="hd" style="top:605px"></div>
<div class="t" style="left:1622px;top:605px;color:#b9b9b9">[1]</div>
<div class="in" style="left:1702px;top:605px;width:86px">4<span class="ax">X</span></div>
<div class="in" style="left:1792px;top:605px;width:87px">-8<span class="ax">Y</span></div>
<svg style="left:1891px;top:608px" width="12" height="13"><use href="#tr"/></svg>
<div class="hd" style="top:635px"></div>
<div class="t" style="left:1622px;top:635px;color:#b9b9b9">[2]</div>
<div class="in" style="left:1702px;top:635px;width:86px">8<span class="ax">X</span></div>
<div class="in" style="left:1792px;top:635px;width:87px">-6<span class="ax">Y</span></div>
<svg style="left:1891px;top:638px" width="12" height="13"><use href="#tr"/></svg>
<div class="hd" style="top:665px"></div>
<div class="t" style="left:1622px;top:665px;color:#b9b9b9">[3]</div>
<div class="in" style="left:1702px;top:665px;width:86px">8<span class="ax">X</span></div>
<div class="in" style="left:1792px;top:665px;width:87px">0<span class="ax">Y</span></div>
<svg style="left:1891px;top:668px" width="12" height="13"><use href="#tr"/></svg>

<div style="left:1578px;top:544px;width:342px;height:5px;background:#ed1c24"></div>
<div style="left:1578px;top:706px;width:342px;height:5px;background:#ed1c24"></div>
<div style="left:1578px;top:544px;width:5px;height:167px;background:#ed1c24"></div>
<div style="left:1917px;top:544px;width:3px;height:167px;background:#ed1c24"></div>
<div class="k" style="left:1576px;top:711px;width:344px;height:1px"></div>

<div style="left:1699px;top:732px;width:98px;height:24px;background:#3c3c3c;border-radius:2px;line-height:24px;text-align:center;color:#c0c0c0">添加组件</div>

<!-- status bar -->
<div class="k" style="left:0;top:1007px;width:1920px;height:1px"></div>
<svg style="left:1722px;top:1013px" width="14" height="14"><circle cx="7" cy="7" r="6.500" fill="#b5b5b5"/><rect x="6" y="6" width="2.200" height="5" fill="#2b2b2b"/><rect x="6" y="3" width="2.200" height="2" fill="#2b2b2b"/></svg>
<div class="t" style="left:1739px;top:1010px;color:#b5c5d5">0</div>
<svg style="left:1754px;top:1013px" width="14" height="14"><circle cx="7" cy="7" r="6.500" fill="#b5b5b5"/><rect x="6" y="3" width="2.200" height="5" fill="#2b2b2b"/><rect x="6" y="9" width="2.200" height="2" fill="#2b2b2b"/></svg>
<div class="t" style="left:1772px;top:1010px;color:#b5c5d5">0</div>
<svg style="left:1787px;top:1013px" width="14" height="14"><circle cx="7" cy="7" r="6.500" fill="#b5b5b5"/><path stroke="#2b2b2b" stroke-width="2" d="M4.500 4.500 9.500 9.500M9.500 4.500 4.500 9.500"/></svg>
<div class="t" style="left:1804px;top:1010px;color:#b5c5d5">0</div>
<svg style="left:1829px;top:1013px" width="12" height="14"><path fill="#b5b5b5" d="M6 1C9 1 9.500 4 9.500 7 9.500 9 10.500 10 11.500 11H.5C1.500 10 2.500 9 2.500 7 2.500 4 3 1 6 1ZM4.500 12H7.500V13.500H4.500Z"/></svg>
<div class="t" style="left:1843px;top:1010px;color:#b5c5d5">0</div>
<div class="t" style="left:1858px;top:1010px;color:#b5c5d5">版本3.8.4</div>
</div>
</body></html>
